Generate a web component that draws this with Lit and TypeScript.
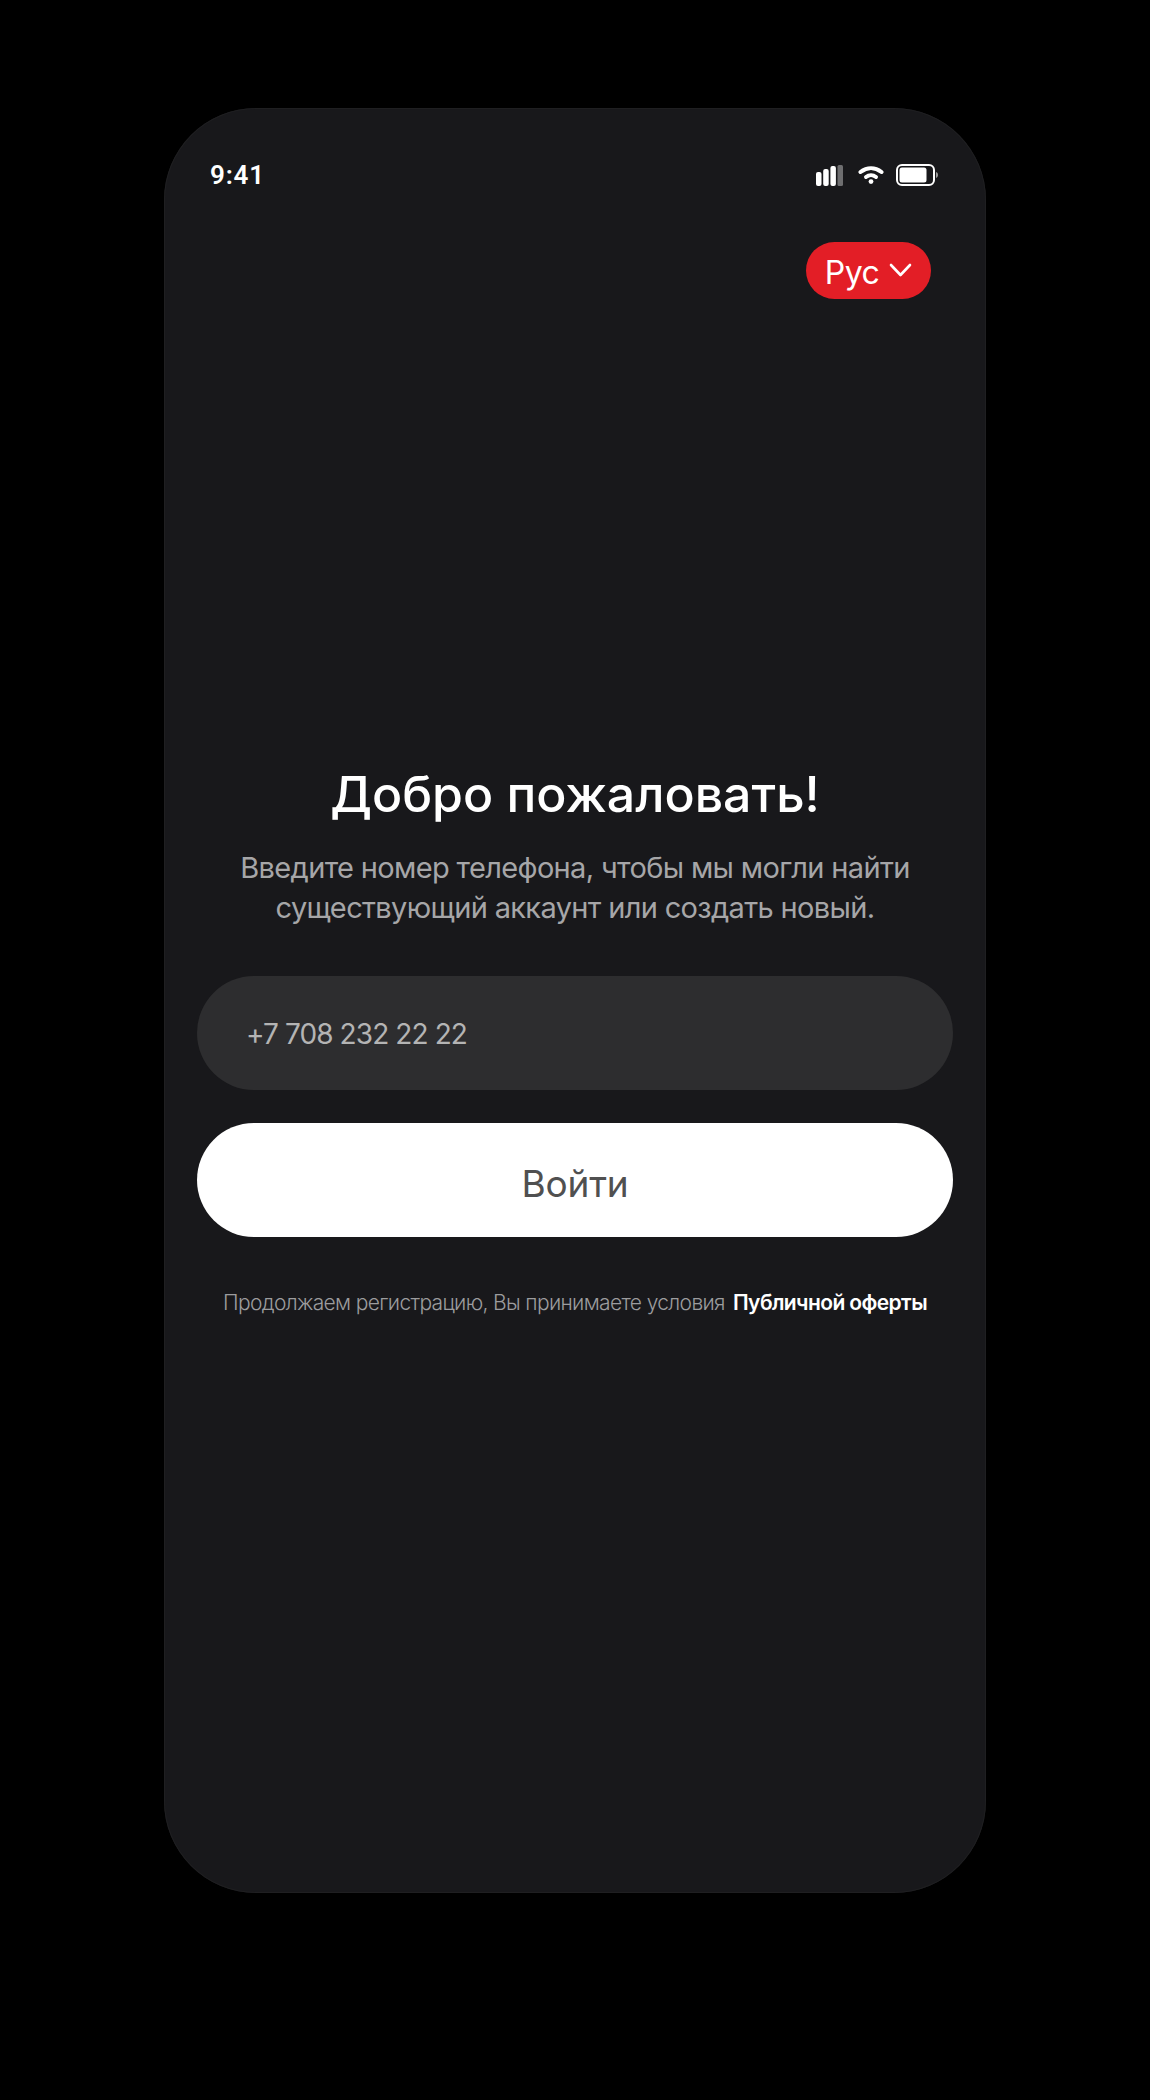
import { LitElement, html, css } from "lit";
import { customElement } from "lit/decorators.js";

@customElement("app-root")
export class AppRoot extends LitElement {
  static styles = css`
    :host { display: block; width: 1150px; height: 2100px; background: #000; font-family: "Inter", "Noto Sans", sans-serif; overflow: hidden; }
    .page { padding: 108px 0 0 164px; }
    .phone { width: 822px; height: 1785px; box-sizing: border-box; background: #18181b; border-radius: 92px; box-shadow: inset 0 0 0 1px #1f1f21; display: flex; flex-direction: column; padding: 0 33px; }
    .status { display: flex; justify-content: space-between; align-items: center; height: 28px; margin-top: 53px; padding: 0 15px 0 13px; }
    .time { font-family: "Roboto", sans-serif; font-weight: 600; font-size: 26px; letter-spacing: 0.8px; color: #fff; line-height: 28px; }
    .icons { display: flex; align-items: center; gap: 12px; }
    .icons svg { display: block; }
    .signal { margin-right: 3px; }
    .lang-row { display: flex; justify-content: flex-end; margin-top: 53px; padding-right: 22px; }
    .lang { width: 125px; height: 57px; box-sizing: border-box; border-radius: 29px; background: #e31e26; color: #fff; display: flex; align-items: center; justify-content: center; gap: 10px; font-size: 32px; font-weight: 400; letter-spacing: -0.6px; }
    .lang span { padding-top: 4px; }
    .lang svg { margin-bottom: 2px; }
    .title { margin: 464px 0 0; text-align: center; font-size: 50px; line-height: 62px; font-weight: 500; color: #fff; letter-spacing: 0; }
    .sub { margin: 23px 0 0; text-align: center; font-size: 29px; line-height: 40px; font-weight: 400; color: #a6a6a8; letter-spacing: -0.65px; }
    .field { margin-top: 48px; height: 114px; box-sizing: border-box; padding-top: 2px; border-radius: 57px; background: #2d2d2f; display: flex; align-items: center; padding-left: 49px; color: #b4b4b4; font-size: 28px; letter-spacing: -0.9px; }
    .btn { margin-top: 33px; height: 114px; box-sizing: border-box; padding-top: 6px; border-radius: 57px; background: #fff; display: flex; align-items: center; justify-content: center; color: #505050; font-size: 37px; letter-spacing: -0.2px; }
    .terms { margin-top: 52px; display: flex; justify-content: center; gap: 8px; font-size: 21px; line-height: 28px; font-weight: 300; color: #9c9c9e; letter-spacing: -0.65px; }
    .terms b { font-weight: 600; color: #fff; letter-spacing: -0.6px; }
  `;

  render() {
    return html`
      <div class="page">
        <div class="phone">
          <div class="status">
            <span class="time">9:41</span>
            <div class="icons">
              <svg class="signal" width="27" height="21" viewBox="0 0 27 21">
                <rect x="0" y="7" width="5.5" height="14" rx="2" fill="#fff"/>
                <rect x="7.2" y="4" width="5.5" height="17" rx="2" fill="#fff"/>
                <rect x="14.4" y="1" width="5.5" height="20" rx="2" fill="#fff"/>
                <rect x="21.5" y="0" width="5.5" height="21" rx="1.5" fill="#6e6e70"/>
              </svg>
              <svg width="26" height="18" viewBox="0 0 26 18" fill="none" stroke="#fff" stroke-width="4" stroke-linecap="round">
                <path d="M2.5 6C9 1 17 1 23.5 6"/>
                <path d="M8 11C11 8.6 15 8.6 18 11"/>
                <circle cx="13" cy="15.6" r="2.4" fill="#fff" stroke="none"/>
              </svg>
              <svg width="42" height="22" viewBox="0 0 42 22">
                <rect x="1" y="1" width="37" height="20" rx="5" fill="none" stroke="#fff" stroke-width="2"/>
                <rect x="3.5" y="3.5" width="27" height="15" rx="2.5" fill="#fff"/>
                <path d="M40 8c1.4.4 2 1.6 2 3s-.6 2.6-2 3z" fill="#9a9a9a"/>
              </svg>
            </div>
          </div>
          <div class="lang-row">
            <div class="lang">
              <span>Рус</span>
              <svg width="23" height="14" viewBox="0 0 23 14" fill="none" stroke="#fff" stroke-width="2.6" stroke-linecap="round" stroke-linejoin="round"><path d="M2 2l9.5 10L21 2"/></svg>
            </div>
          </div>
          <h1 class="title">Добро пожаловать!</h1>
          <p class="sub">Введите номер телефона, чтобы мы могли найти<br>существующий аккаунт или создать новый.</p>
          <div class="field">+7 708 232 22 22</div>
          <div class="btn">Войти</div>
          <div class="terms"><span>Продолжаем регистрацию, Вы принимаете условия</span><b>Публичной оферты</b></div>
        </div>
      </div>
    `;
  }
}
